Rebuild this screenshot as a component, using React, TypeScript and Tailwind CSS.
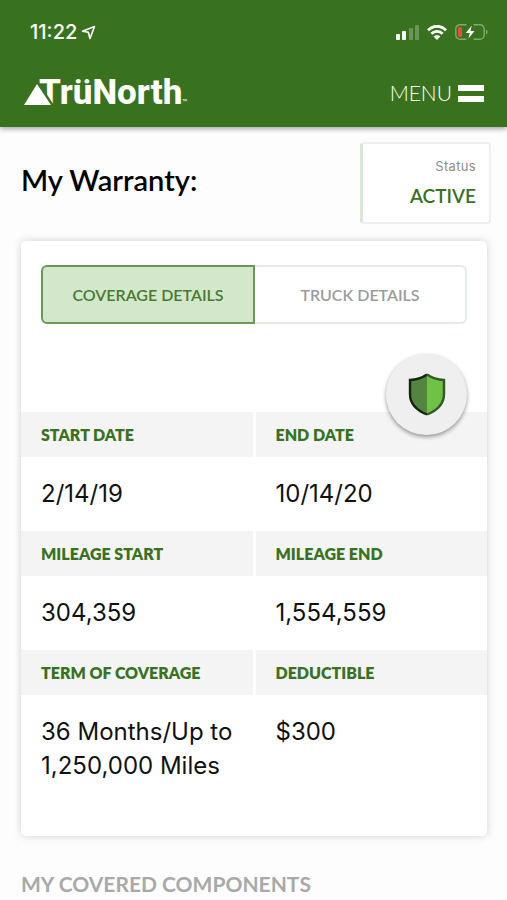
import { useState } from "react";

interface Detail {
  label: string;
  value: string;
}

const details: Detail[] = [
  { label: "START DATE", value: "2/14/19" },
  { label: "END DATE", value: "10/14/20" },
  { label: "MILEAGE START", value: "304,359" },
  { label: "MILEAGE END", value: "1,554,559" },
  { label: "TERM OF COVERAGE", value: "36 Months/Up to 1,250,000 Miles" },
  { label: "DEDUCTIBLE", value: "$300" },
];

function StatusBar() {
  return (
    <div className="flex items-center justify-between pl-[30px] pr-[19px] pt-5">
      <div className="flex items-center gap-1 text-xl leading-6 font-medium">
        <span>11:22</span>
        <svg width="15" height="15" viewBox="0 0 15 15" fill="none" stroke="currentColor" strokeWidth="1.6" strokeLinejoin="round">
          <path d="M13.5 1.5 1.5 6.2l5.8 1L9 13.5z" />
        </svg>
      </div>
      <div className="flex items-center gap-2">
        <svg width="23" height="15" viewBox="0 0 23 15" fill="currentColor">
          <rect x="0" y="9" width="4" height="6" rx="1" />
          <rect x="6" y="6" width="4" height="9" rx="1" />
          <rect x="13" y="3" width="4" height="12" rx="1" opacity="0.25" />
          <rect x="19" y="0" width="4" height="15" rx="1" opacity="0.25" />
        </svg>
        <svg width="20" height="15" viewBox="0 0 20 15" fill="none" stroke="currentColor" strokeWidth="2.8">
          <path d="M1 5.2C6-.1 14-.1 19 5.2" />
          <path d="M4.4 8.8c3.2-3.3 8-3.3 11.2 0" />
          <path d="M10 15 6.6 11.5c1.8-1.7 5-1.7 6.8 0z" fill="currentColor" stroke="none" />
        </svg>
        <svg width="33" height="16" viewBox="0 0 33 16" fill="none">
          <path d="M11.5.8H5A4.2 4.2 0 0 0 .8 5v6A4.2 4.2 0 0 0 5 15.2h6.5M18.5.8H25A4.2 4.2 0 0 1 29.2 5v6a4.2 4.2 0 0 1-4.2 4.2h-6.5" stroke="#7dab6a" strokeWidth="1.4" />
          <path d="M31 5.5c2 .8 2 4.2 0 5z" fill="#7dab6a" />
          <rect x="3" y="3" width="4" height="10" rx="1.5" fill="#e5503f" />
          <path d="M16.8 1.5 10.8 9h4l-1.4 5.5L19.5 7h-4z" fill="#fff" />
        </svg>
      </div>
    </div>
  );
}

function Logo() {
  return (
    <a href="#" className="relative flex items-end pl-[15px] font-['Roboto',sans-serif] font-extrabold">
      <span className="text-[35px] leading-9">TrüNorth</span>
      <span className="text-[8px] leading-4 font-normal">™</span>
      {/* the triangle sits over the stem of the T */}
      <svg width="32" height="25" viewBox="0 0 32 25" className="absolute bottom-[6px] left-0">
        <path d="M13 2 30 28" stroke="#39721f" strokeWidth="3" />
        <path d="M0 25 13 4l14 21z" fill="#fff" />
      </svg>
    </a>
  );
}

function Header() {
  return (
    <header className="h-[127px] bg-[#39721f] font-['Inter',sans-serif] text-white shadow-[0_2px_5px_rgba(0,0,0,0.35)]">
      <StatusBar />
      <div className="flex items-center justify-between pt-[31px] pl-6 pr-[23px]">
        <Logo />
        <button className="flex items-center gap-[6px] font-['Lato',sans-serif] text-[21px] leading-8 font-light">
          MENU
          <span className="flex w-[26px] flex-col gap-[5px]">
            <span className="h-[6px] bg-white" />
            <span className="h-[6px] bg-white" />
          </span>
        </button>
      </div>
    </header>
  );
}

function ShieldBadge() {
  return (
    <div className="absolute top-[113px] right-5 flex size-[81px] items-center justify-center rounded-full bg-[#efefef] shadow-[0_2px_4px_rgba(0,0,0,0.4)]">
      <svg width="38" height="43" viewBox="0 0 38 43">
        <path d="M19 2C14 5.5 8 7 2 7v14c0 9 7 16 17 20z" fill="#518540" />
        <path d="M19 2c5 3.5 11 5 17 5v14c0 9-7 16-17 20z" fill="#6fc243" />
        <path d="M19 1.5C14 5 8 6.8 2 7v14c0 9.5 7 16.5 17 20.5" fill="none" stroke="#14240f" strokeWidth="2.4" />
        <path d="M19 1.5c5 3.5 11 5.3 17 5.5v14c0 9.5-7 16.5-17 20.5" fill="none" stroke="#35592a" strokeWidth="2.4" />
      </svg>
    </div>
  );
}

export default function App() {
  const [tab, setTab] = useState("coverage");

  return (
    <div className="min-h-screen bg-[#fdfdfd] font-['Inter',sans-serif]">
      <Header />
      <main className="pr-5 pl-[21px] pt-[15px]">
        <div className="flex items-start justify-between">
          <h1 className="pt-[18px] font-['Lato',sans-serif] text-[29px] leading-10 font-semibold text-black">
            My Warranty:
          </h1>
          <div className="-mr-1 w-[131px] rounded-sm border-2 border-l-[3px] border-[#efefef] border-l-[#dce6d4] bg-white px-[13px] pt-3 pb-[11px] text-right">
            <p className="text-[13px] leading-5 tracking-wide text-[#8c8c8c]">Status</p>
            <p className="pt-[6px] pb-px font-['Lato',sans-serif] text-[19px] leading-7 font-semibold text-[#39721f]">ACTIVE</p>
          </div>
        </div>

        <section className="relative mt-[17px] rounded-[5px] bg-white shadow-[0_0_8px_rgba(0,0,0,0.18)]">
          <div className="flex px-5 pt-6 font-['Lato',sans-serif] text-base font-semibold">
            <button
              onClick={() => setTab("coverage")}
              aria-pressed={tab === "coverage"}
              className="h-[59px] flex-1 rounded-l-md border-2 border-[#6b9759] bg-[#d3e8cb] text-[#467a30]"
            >
              COVERAGE DETAILS
            </button>
            <button
              onClick={() => setTab("truck")}
              aria-pressed={tab === "truck"}
              className="h-[59px] flex-1 rounded-r-md border-2 border-l-0 border-[#e4ebe0] text-[#9c9c9c]"
            >
              TRUCK DETAILS
            </button>
          </div>
          <dl className="grid grid-cols-2 gap-x-[3px] pt-[88px] pb-[33px]">
            {details.map((detail) => (
              <div key={detail.label}>
                <dt className="bg-[#f4f4f4] px-5 font-['Lato',sans-serif] text-base leading-[45px] font-extrabold text-[#39721f]">
                  {detail.label}
                </dt>
                <dd className="px-5 py-5 text-2xl leading-[34px] text-[#111]">{detail.value}</dd>
              </div>
            ))}
          </dl>
          <ShieldBadge />
        </section>

        <h2 className="pt-8 font-['Lato',sans-serif] text-[21px] leading-8 font-bold text-[#a9a9a9]">
          MY COVERED COMPONENTS
        </h2>
      </main>
    </div>
  );
}
